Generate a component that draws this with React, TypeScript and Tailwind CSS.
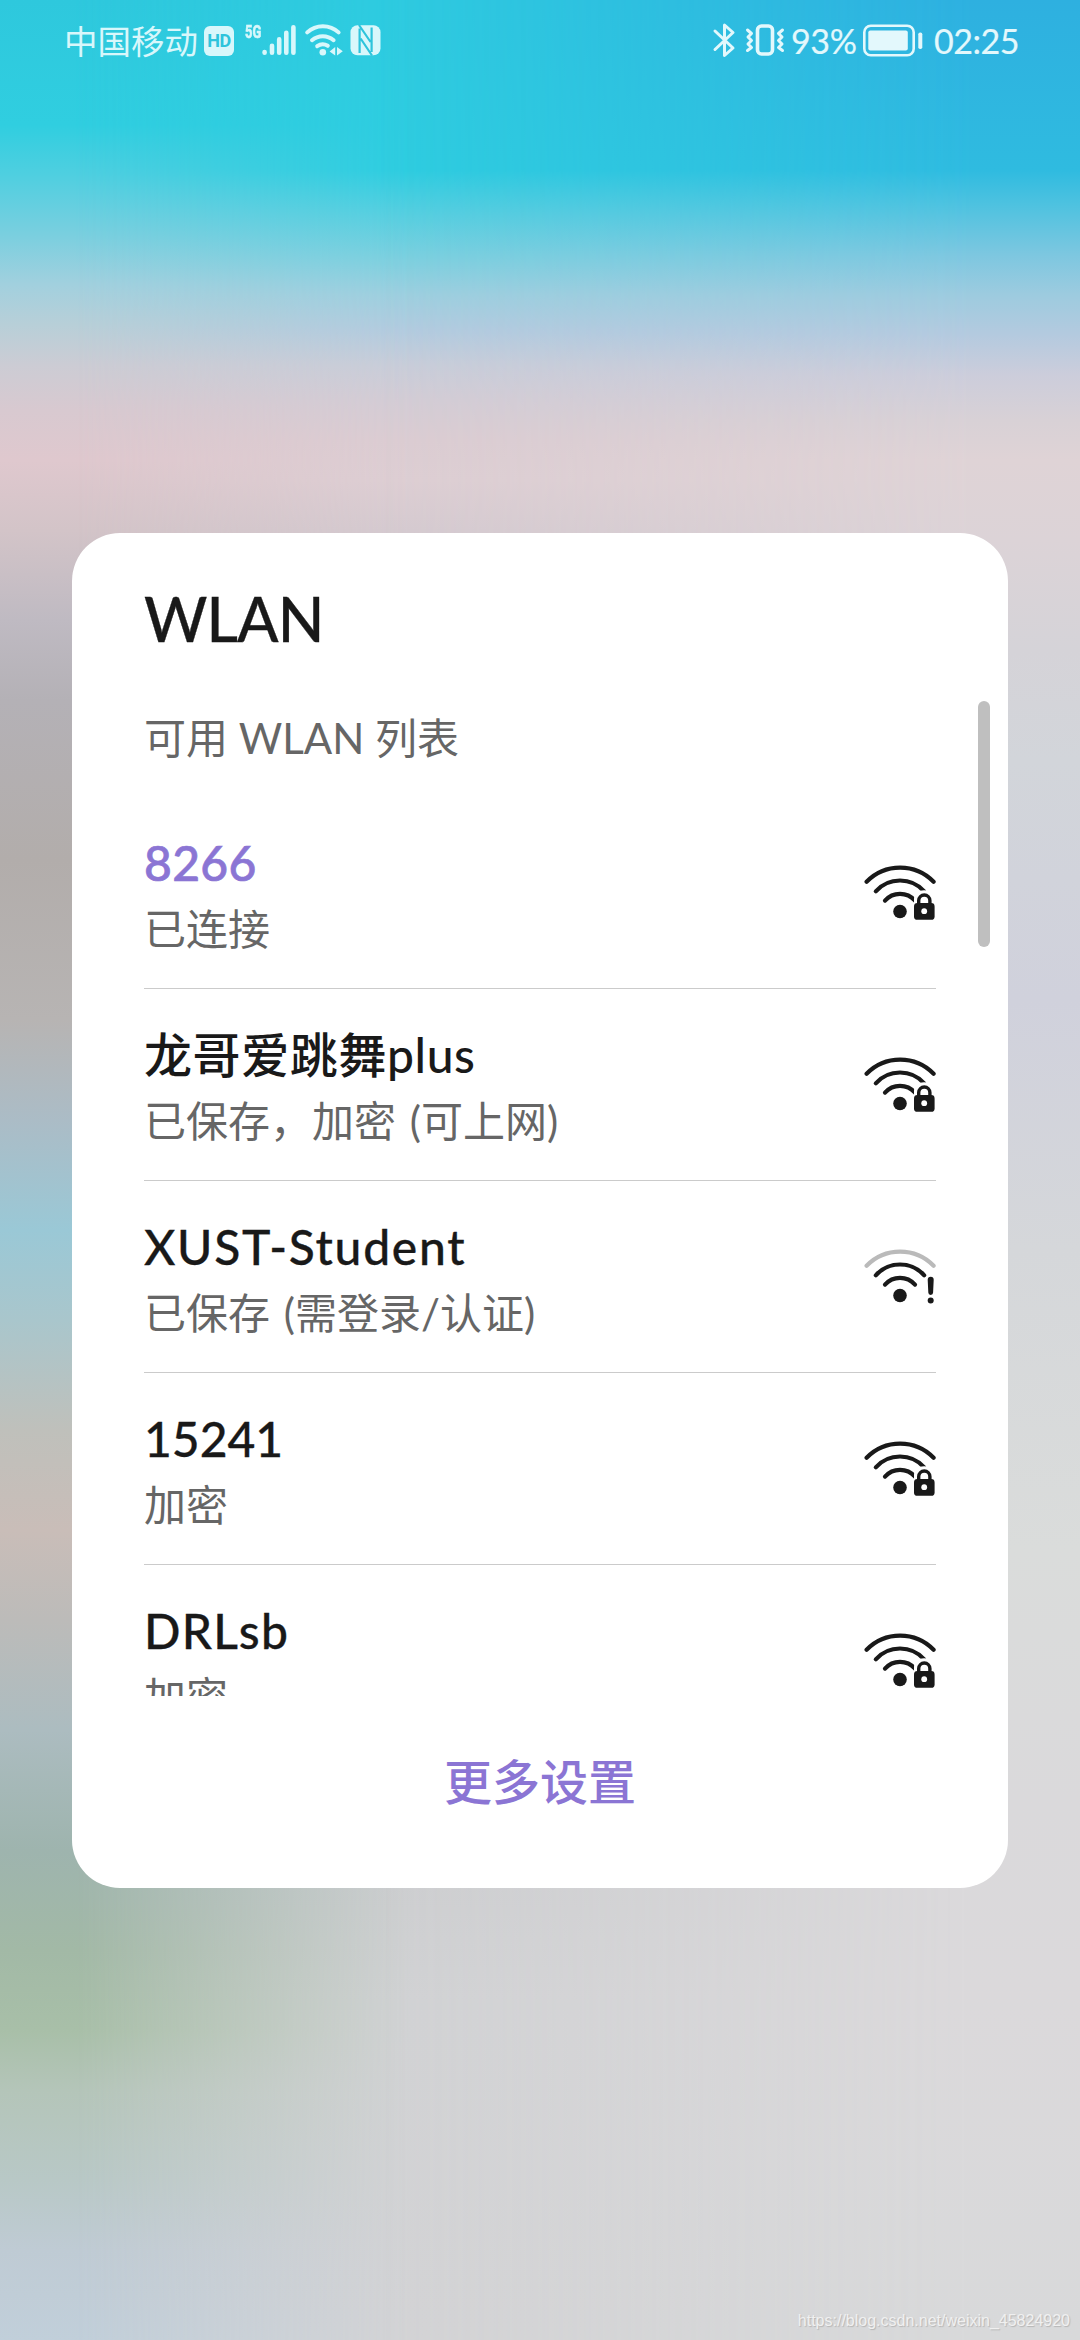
type Network = {
  ssid: string;
  status: string;
  tracking: string;
  connected?: boolean;
  portal?: boolean;
};

const networks: Network[] = [
  {
    ssid: '8266',
    status: '已连接',
    tracking: 'tracking-[0.3px] [-webkit-text-stroke:0.7px]',
    connected: true,
  },
  {
    ssid: '龙哥爱跳舞plus',
    status: '已保存，加密 (可上网)',
    tracking: 'tracking-[0.6px]',
  },
  {
    ssid: 'XUST-Student',
    status: '已保存 (需登录/认证)',
    tracking: 'tracking-[1.7px] [-webkit-text-stroke:0.3px]',
    portal: true,
  },
  {
    ssid: '15241',
    status: '加密',
    tracking: '[-webkit-text-stroke:0.3px]',
  },
  {
    ssid: 'DRLsb',
    status: '加密',
    tracking: 'tracking-[1.2px] [-webkit-text-stroke:0.3px]',
  },
];

function SignalIcon({ portal }: { portal?: boolean }) {
  return (
    <svg className="mb-[2px]" width="72" height="72" viewBox="0 0 72 72" fill="none">
      <g stroke="#191919" strokeWidth="4.2" strokeLinecap="round">
        <path
          d="M2.6 25.8A46.7 46.7 0 0 1 69.6 25.8"
          stroke={portal ? '#bababa' : '#191919'}
        />
        <path d="M11.8 35.3A32.5 32.5 0 0 1 60.2 35.3" />
        <path d="M21 44.6A20 20 0 0 1 51 44.6" />
      </g>
      <circle cx="36" cy="55.5" r="6.8" fill="#191919" />
      {portal ? (
        <g fill="#191919">
          <path d="M63.7 39.8a3 3 0 0 1 6 0l-.6 12.8a2.4 2.4 0 0 1-4.800 0z" />
          <circle cx="66.7" cy="60.6" r="3" />
        </g>
      ) : (
        <g>
          <path
            d="M50 72V42.5C50 37.5 54 34.3 60 34.3S72 37.5 74 42V72z"
            fill="#fff"
          />
          <rect x="50" y="47" width="20.6" height="16.8" rx="3.4" fill="#191919" />
          <path
            d="M54.7 49V44.6a5.6 5.6 0 0 1 11.2 0V49"
            stroke="#191919"
            strokeWidth="3.4"
          />
          <circle cx="60.2" cy="55.2" r="2.9" fill="#fff" />
        </g>
      )}
    </svg>
  );
}

function StatusBar() {
  return (
    <div className="relative flex h-20 items-start justify-between pl-[64px] pr-[63px] text-[#d8f7fb]">
      <div className="flex items-start">
        <span className="mt-[17px] w-[140px] whitespace-nowrap text-[33.5px] leading-[48px]">
          中国移动
        </span>
        <span className="mt-[26px] flex h-[30px] w-[30px] items-center justify-center rounded-[6px] bg-[#d8f7fb] font-['Roboto'] text-[18px] font-bold leading-none tracking-[-0.5px] text-[#2ec4dc]">
          HD
        </span>
        <span className="ml-[11px] mt-[23px] w-[16px] origin-left scale-x-[0.72] font-['Roboto'] text-[18px] font-bold leading-[18px] [-webkit-text-stroke:0.6px]">
          5G
        </span>
        <svg className="mt-[24px]" width="120" height="34" viewBox="260 24 120 34" fill="none">
          <g stroke="currentColor" strokeWidth="4.6" strokeLinecap="round">
            <path d="M263.6 52.8v-.8M271 52.8v-7M278.2 52.8v-13.4M285.3 52.8v-20M292.4 52.8v-25.6" />
          </g>
          <g stroke="currentColor" strokeWidth="4" strokeLinecap="round">
            <path d="M306.2 32.4a23 23 0 0 1 31.4 0" />
            <path d="M311 40.2a16.5 16.5 0 0 1 21.6 0" />
            <path d="M316.2 46.2a9.5 9.5 0 0 1 10.6-.4" />
          </g>
          <circle cx="321.8" cy="52.2" r="3.3" fill="currentColor" />
          <path d="M334.2 47v8.6l-5.6-4zM336 47l5.8 4.2-5.8 4.4z" fill="currentColor" />
          <rect x="349.5" y="25.2" width="30" height="30" rx="7" fill="currentColor" />
          <path
            d="M358.6 53V28.500M359.600 38.500L371 55.500M370.600 27.500V52M369.600 42L358 25"
            stroke="#2ec4dc"
            strokeWidth="2.2"
          />
        </svg>
      </div>

      <div className="flex items-start font-['Lato'] text-[34px] text-[#e3f8fc] [-webkit-text-stroke:0.2px]">
        <svg className="mt-[22px]" width="75" height="36" viewBox="711 22 75 36" fill="none">
          <g stroke="currentColor" strokeWidth="3" strokeLinejoin="round" strokeLinecap="round">
            <path d="M714 31l18 17-8.5 7.5V25l8.5 7.5L714 49.5" />
            <path d="M746.5 30l4 3.5-3.5 3.5 3.5 3.5-3.5 3.5 3.5 3.5-4 3" />
            <path d="M781.5 30l-4 3.5 3.5 3.5-3.5 3.5 3.5 3.5-3.5 3.5 4 3" />
            <rect x="756.5" y="26" width="15" height="28" rx="4" strokeWidth="3.6" />
          </g>
        </svg>
        <span className="ml-[4px] mt-[17px] w-[72px] whitespace-nowrap leading-[48px] tracking-[-0.4px]">
          93%
        </span>
        <svg className="mt-[24px]" width="60" height="33" viewBox="862 24 60 33" fill="none">
          <rect x="863.3" y="25.7" width="49.4" height="29.6" rx="6.5" stroke="currentColor" strokeWidth="2.6" />
          <rect x="867.3" y="30.5" width="39.5" height="20" rx="2" fill="currentColor" />
          <rect x="917.3" y="32.5" width="4" height="16.5" rx="1.8" fill="currentColor" />
        </svg>
        <span className="ml-[11px] mt-[17px] w-[83px] whitespace-nowrap leading-[48px] tracking-[-0.5px]">
          02:25
        </span>
      </div>
    </div>
  );
}

function NetworkRow({ ssid, status, tracking, connected, portal }: Network) {
  return (
    <li className="flex h-[192px] items-center justify-between border-b border-[#cbcbcb]">
      <div className="whitespace-nowrap pt-[7px]">
        <p
          className={`text-[48px] font-medium leading-[66px] ${tracking} ${
            connected ? 'text-[#8b75d4]' : 'text-[#191919]'
          }`}
        >
          {ssid}
        </p>
        <p className="text-[42px] leading-[66px] text-[#666] [word-spacing:3px]">{status}</p>
      </div>
      <SignalIcon portal={portal} />
    </li>
  );
}

export default function App() {
  return (
    <main className="relative flex h-[2340px] w-[1080px] flex-col overflow-hidden bg-[linear-gradient(to_bottom,#2ec8dd_0px,#30cee0_125px,#4fcfe0_175px,#7acfdf_235px,#a2d0de_285px,#b8cfd8_325px,#ccccd4_365px,#d8c9d0_410px,#dfc8ce_460px,#d3c4c8_530px,#bfbac2_620px,#b4b1b6_700px,#b2adab_860px,#b7b4b3_1020px,#abbcc6_1120px,#9ac8d6_1230px,#a9c6cc_1320px,#bfc0bb_1430px,#c9bdb8_1530px,#bcbbb9_1620px,#acbcc0_1730px,#9eb4ae_1850px,#a2b9a6_1950px,#a8bfa8_2030px,#b4c5b9_2090px,#b8c8c6_2180px,#bfcbd4_2250px,#c1cfda_2340px)] font-['Lato','Noto_Sans_CJK_SC',sans-serif]">
      {/* blurred wallpaper: centre and right columns fade in over the left one */}
      <div className="absolute inset-0 bg-[linear-gradient(to_bottom,#2ecbe0_0px,#2ecde0_170px,#52cfe0_210px,#7dd0df_260px,#9dcfdf_295px,#b2cbdf_330px,#c8cdd9_365px,#d3ccd5_400px,#dbccd2_440px,#ddced3_480px,#d5cad0_530px,#c8c8cc_700px,#cdced0_1880px,#d1d2d4_2000px,#d3d3d5_2340px)] [mask-image:linear-gradient(to_right,transparent_7%,black_38%)]" />
      <div className="absolute inset-0 bg-[linear-gradient(to_bottom,#2eb0e0_0px,#2fbbe0_170px,#4ec2e0_205px,#7dc7e0_255px,#9dcbdf_295px,#b4cadf_335px,#cccddb_375px,#d8d1d6_420px,#dfd3d6_460px,#dcd3d7_540px,#d5d3d8_650px,#d2d5da_760px,#d0d1dc_1000px,#d5d7da_1250px,#dadcdb_1550px,#dad9db_1800px,#dbd9db_2000px,#d8d9da_2340px)] [mask-image:linear-gradient(to_right,transparent_35%,black_90%)]" />

      <StatusBar />

      <section className="relative mx-[72px] mt-[453px] flex h-[1355px] flex-col rounded-[48px] bg-white px-[72px]">
        <h1 className="mt-[46px] h-[122px] text-[61px] font-medium leading-[80px] tracking-[-0.9px] text-[#191919] [-webkit-text-stroke:0.3px]">
          WLAN
        </h1>
        <div className="h-[995px] overflow-hidden">
          <h2 className="h-[96px] pt-[7px] text-[42px] leading-[60px] text-[#666]">
            可用 WLAN 列表
          </h2>
          <ul>
            {networks.map((network) => (
              <NetworkRow key={network.ssid} {...network} />
            ))}
          </ul>
        </div>
        <button className="mt-[50px] text-[48px] font-medium leading-[72px] text-[#8b75d4]">
          更多设置
        </button>
        <div className="absolute right-[18px] top-[168px] h-[246px] w-[12px] rounded-full bg-[#bfbfbf]" />
      </section>

      <p className="absolute bottom-[8px] right-[10px] font-['Liberation_Sans'] text-[16px] leading-[22px] text-[#f0f0f0] [text-shadow:1px_1px_1px_#b5b5b5]">
        https://blog.csdn.net/weixin_45824920
      </p>
    </main>
  );
}
